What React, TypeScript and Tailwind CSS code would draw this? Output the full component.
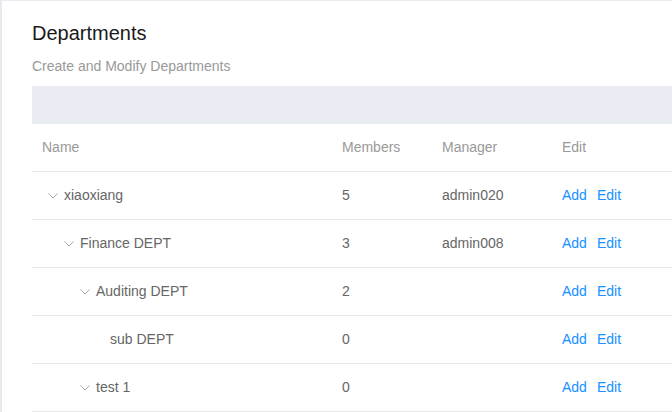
type Dept = {
  name: string;
  level: number;
  hasChildren: boolean;
  members: number;
  manager?: string;
};

const DEPTS: Dept[] = [
  { name: "xiaoxiang", level: 0, hasChildren: true, members: 5, manager: "admin020" },
  { name: "Finance DEPT", level: 1, hasChildren: true, members: 3, manager: "admin008" },
  { name: "Auditing DEPT", level: 2, hasChildren: true, members: 2 },
  { name: "sub DEPT", level: 3, hasChildren: false, members: 0 },
  { name: "test 1", level: 2, hasChildren: true, members: 0 },
];

const indentClass = ["pl-[16px]", "pl-[32px]", "pl-[48px]", "pl-[62px]"];

function Chevron() {
  return (
    <svg width="10" height="6" viewBox="0 0 10 6" className="mr-[6px] mt-[1px]">
      <polyline points="0.5,0.5 5,5 9.5,0.5" fill="none" stroke="#aaa" strokeWidth="1" />
    </svg>
  );
}

export default function App() {
  return (
    <div className="min-h-screen bg-[#e9eaef] pl-[2px] pt-px font-['Liberation_Sans',Arial,sans-serif]">
      <div className="bg-white min-h-[411px] pl-[30px] pt-[20px] overflow-hidden">
        {/* Header */}
        <h1 className="text-[20px] leading-[24px] text-[#1a1a1a]">Departments</h1>
        <p className="mt-[12px] text-[14px] leading-[18px] text-[#999]">Create and Modify Departments</p>

        {/* Toolbar strip */}
        <div className="mt-[11px] h-[38px] bg-[#e9ecf2] w-[700px]"></div>

        {/* Table */}
        <div className="w-[700px] text-[14px]">
          <div className="grid grid-cols-[300px_100px_120px_1fr] h-[48px] items-center border-b border-[#e8e8e8] text-[#999]">
            <div className="px-[10px]">Name</div>
            <div className="px-[10px]">Members</div>
            <div className="px-[10px]">Manager</div>
            <div className="px-[10px]">Edit</div>
          </div>
          {DEPTS.map((d) => (
            <div
              key={d.name}
              className="grid grid-cols-[300px_100px_120px_1fr] h-[48px] items-center border-b border-[#e8e8e8] text-[#666]"
            >
              <div className={`flex items-center ${indentClass[d.level]}`}>
                {d.hasChildren ? <Chevron /> : <span className="w-[16px]"></span>}
                <span>{d.name}</span>
              </div>
              <div className="px-[10px]">{d.members}</div>
              <div className="px-[10px]">{d.manager ?? ""}</div>
              <div className="px-[10px] flex gap-[10px] text-[#1890ff]">
                <span>Add</span>
                <span>Edit</span>
              </div>
            </div>
          ))}
        </div>
      </div>
    </div>
  );
}
